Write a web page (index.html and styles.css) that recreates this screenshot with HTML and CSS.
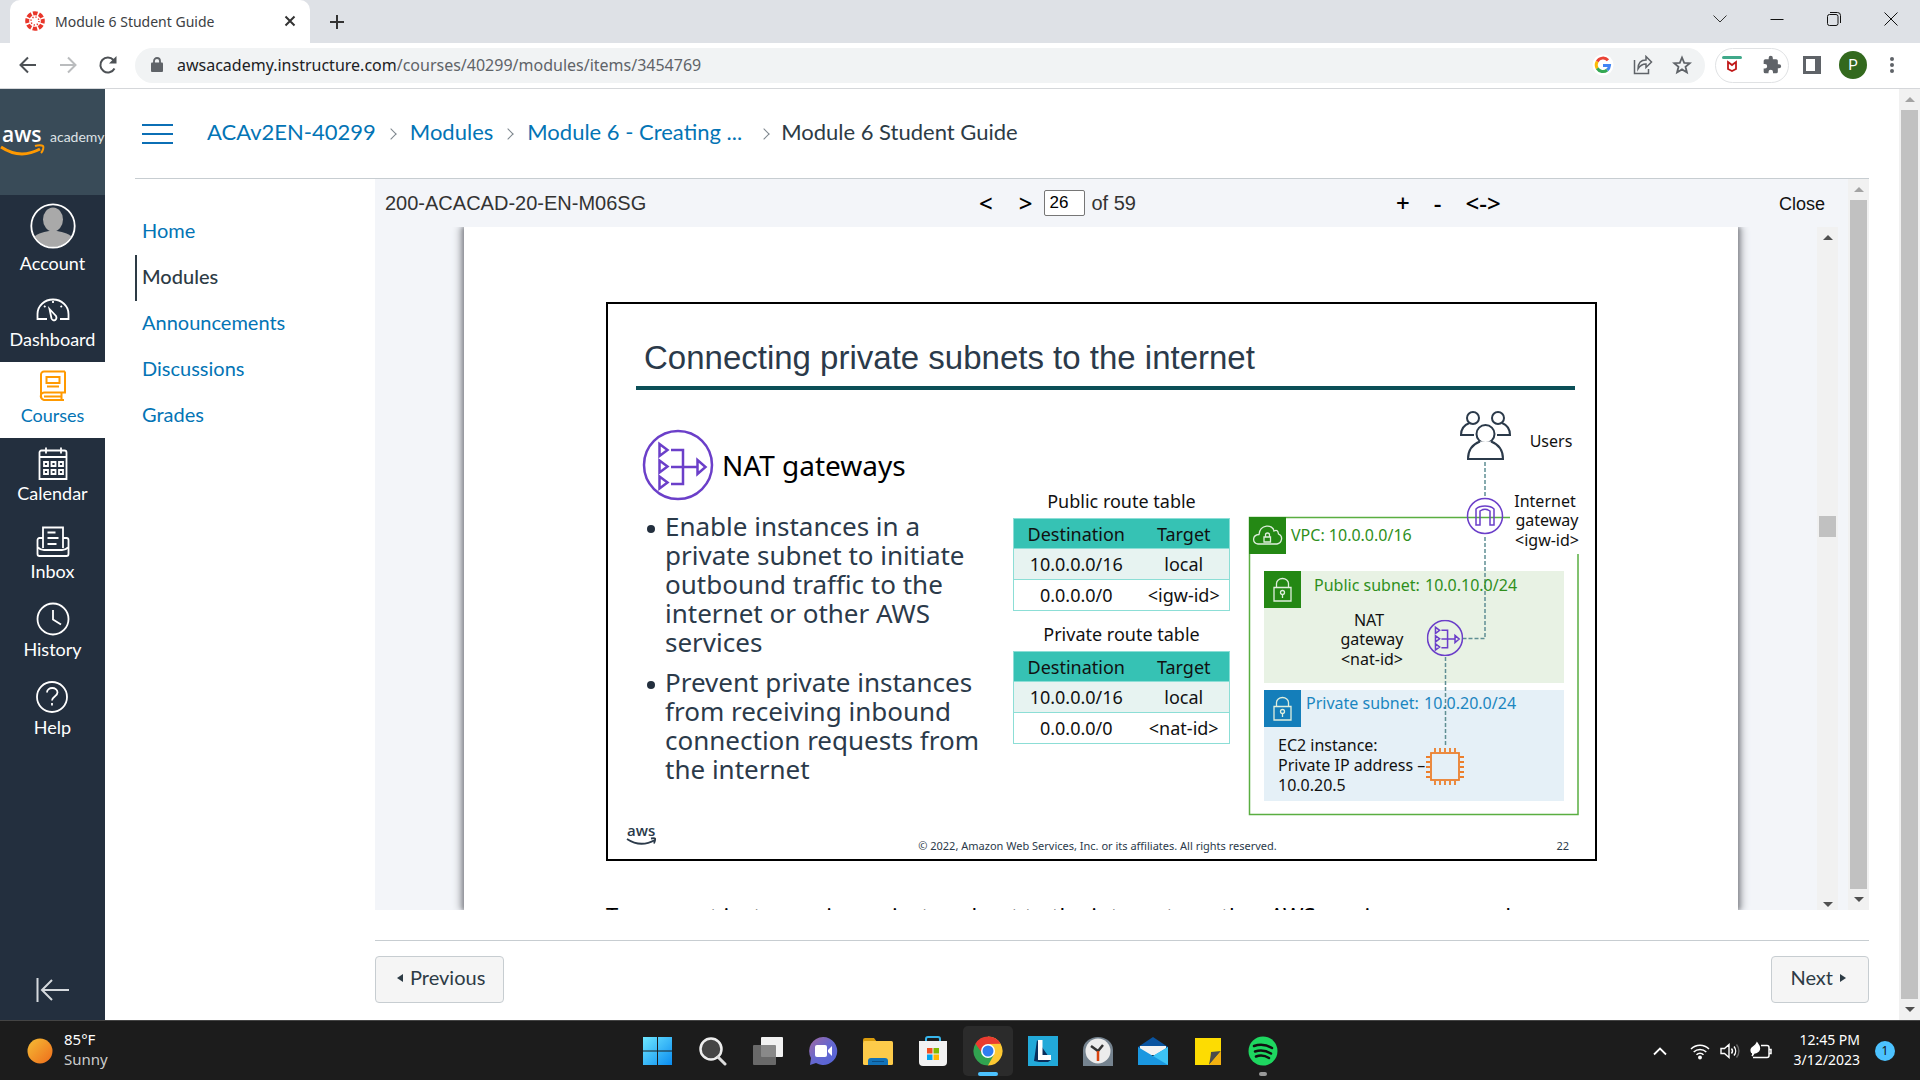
FILE: index.html
```html
<!DOCTYPE html>
<html lang="en">
<head>
<meta charset="utf-8">
<title>Module 6 Student Guide</title>
<link rel="stylesheet" href="styles.css">
</head>
<body>
<svg class="defs" aria-hidden="true">
  <symbol id="nat" viewBox="0 0 72 72">
    <circle cx="36" cy="36" r="34"/>
    <path d="M17.500 15v12l8-6zM17.500 31.500v12l8-6zM17.500 47.500v12l8-6zM55.500 31v14l8-7zM29 21h12v34H29M29 38h26"/>
  </symbol>
  <symbol id="lock" viewBox="0 0 37 37">
    <path d="M10 16.500h17v13.500H10zM12.500 16.500v-4a6 5 0 0 1 12 0v4M18.500 23v4"/>
    <circle cx="18.500" cy="21.500" r="2"/>
  </symbol>
</svg>

<header class="tabstrip">
  <div class="tab">
    <svg width="20" height="20" viewBox="0 0 20 20"><g fill="none" stroke="#e8362a"><circle cx="10" cy="10" r="7.800" stroke-width="4" stroke-dasharray="4.500 1.625" stroke-dashoffset="2.250"/><circle cx="10" cy="10" r="4" stroke-width="1.500" stroke-dasharray="1.200 1.940"/></g></svg>
    <span class="tab-title">Module 6 Student Guide</span>
    <button class="bare" aria-label="Close tab"><svg width="12" height="12" viewBox="0 0 12 12"><path d="M1.500 1.500l9 9m0-9l-9 9" stroke="#333" stroke-width="2"/></svg></button>
  </div>
  <button class="bare newtab" aria-label="New tab"><svg width="16" height="16" viewBox="0 0 16 16"><path d="M8 1v14M1 8h14" stroke="#333" stroke-width="2"/></svg></button>
  <div class="window-controls">
    <button class="bare" aria-label="Search tabs"><svg width="16" height="16" viewBox="0 0 16 16" fill="none" stroke="#333"><path d="M1.500 4.500L8 11l6.500-6.500"/></svg></button>
    <button class="bare" aria-label="Minimize"><svg width="16" height="16" viewBox="0 0 16 16"><path d="M1.500 8.500h13" stroke="#111"/></svg></button>
    <button class="bare" aria-label="Restore"><svg width="16" height="16" viewBox="0 0 16 16" fill="none" stroke="#111"><rect x="1.500" y="3.500" width="10.500" height="11" rx="2"/><path d="M4 1.500h7.500a3 3 0 0 1 3 3V12"/></svg></button>
    <button class="bare" aria-label="Close"><svg width="16" height="16" viewBox="0 0 16 16"><path d="M1.500 1.500l13 13m0-13l-13 13" stroke="#111"/></svg></button>
  </div>
</header>

<div class="toolbar">
  <button class="bare" aria-label="Back"><svg width="20" height="20" viewBox="0 0 20 20" fill="none" stroke="#4d5155" stroke-width="2"><path d="M18 10H3M10 2.500L2.500 10l7.500 7.500"/></svg></button>
  <button class="bare" aria-label="Forward"><svg width="20" height="20" viewBox="0 0 20 20" fill="none" stroke="#babcbe" stroke-width="2"><path d="M2 10h15M10 2.500l7.500 7.500-7.500 7.500"/></svg></button>
  <button class="bare" aria-label="Reload"><svg width="20" height="20" viewBox="0 0 20 20" fill="none" stroke="#4d5155" stroke-width="2"><path d="M16.500 13.500A7.500 7.500 0 1 1 15.500 5L17 6.500"/><path d="M18.500 1v7.500H11z" fill="#4d5155" stroke="none"/></svg></button>
  <div class="omnibox">
    <svg width="12" height="16" viewBox="0 0 12 16"><path d="M3 6V4a3 3 0 0 1 6 0v2" fill="none" stroke="#5f6368" stroke-width="1.800"/><rect y="5.500" width="12" height="9.500" rx="1" fill="#5f6368"/></svg>
    <span class="url"><b>awsacademy.instructure.com</b>/courses/40299/modules/items/3454769</span>
    <svg width="22" height="22" viewBox="0 0 22 22"><circle cx="11" cy="11" r="10.500" fill="#fff"/><g fill="none" stroke-width="3"><path d="M16 6.200A6.700 6.700 0 0 0 5.200 7.600" stroke="#ea4335"/><path d="M5.200 7.600a6.700 6.700 0 0 0 0 6.800" stroke="#fbbc05"/><path d="M5.200 14.400a6.700 6.700 0 0 0 10 1.600" stroke="#34a853"/><path d="M15.200 16a6.500 6.500 0 0 0 2.300-4.500H11" stroke="#4285f4"/></g></svg>
    <svg width="20" height="20" viewBox="0 0 20 20" fill="none" stroke="#5f6368" stroke-width="1.500"><path d="M1.500 5v13.500h14V14"/><path d="M5 14c0-6 3-9 8-9V1.500l5.500 5.500-5.500 5.500V9c-4 0-6 1.500-8 5z"/></svg>
    <svg width="20" height="20" viewBox="0 0 20 20" fill="none" stroke="#5f6368" stroke-width="1.800"><path d="M10 2.500l2.200 5.300 5.600.4-4.300 3.600 1.400 5.600-4.900-3-4.900 3 1.400-5.600L2.200 8.200l5.600-.4z"/></svg>
  </div>
  <div class="extensions">
    <svg width="20" height="20" viewBox="0 0 20 20"><rect y="1" width="20" height="3" rx="1.500" fill="#40a98a"/><path d="M6 7l4 3 4-3v7l-4 2-4-2z" fill="none" stroke="#c01818" stroke-width="1.800"/></svg>
    <svg width="20" height="20" viewBox="0 0 24 24"><path fill="#5f6368" d="M20.500 11H19V7a2 2 0 0 0-2-2h-4V3.500a2.500 2.500 0 0 0-5 0V5H4a2 2 0 0 0-2 2v3.800h1.500a2.700 2.700 0 0 1 0 5.400H2V20a2 2 0 0 0 2 2h3.800v-1.500a2.700 2.700 0 0 1 5.400 0V22H17a2 2 0 0 0 2-2v-4h1.500a2.500 2.500 0 0 0 0-5z"/></svg>
  </div>
  <svg class="sidepanel" width="18" height="18" viewBox="0 0 18 18"><path fill="#5f6368" d="M0 0h18v18H0zM3 3v12h9V3z" fill-rule="evenodd"/></svg>
  <span class="profile">P</span>
  <svg class="kebab" width="4" height="18" viewBox="0 0 4 18" fill="#5f6368"><circle cx="2" cy="3" r="2"/><circle cx="2" cy="9" r="2"/><circle cx="2" cy="15" r="2"/></svg>
</div>

<div class="content">
  <nav class="global-nav" aria-label="Global">
    <a class="logo" href="#"><svg width="105" height="106" viewBox="0 0 105 106"><text x="2" y="53" class="logo-aws">aws</text><text x="50" y="53" class="logo-academy">academy</text><path d="M1 58c12 8 26 9 39 2" fill="none" stroke="#f90" stroke-width="3"/><path d="M35 57c3-1 7-1 8 0s0 5-2 7" fill="none" stroke="#f90" stroke-width="2"/></svg></a>
    <a class="nav-item account" href="#"><svg width="46" height="46" viewBox="0 0 46 46"><clipPath id="face"><circle cx="23" cy="23" r="21"/></clipPath><g clip-path="url(#face)" fill="#a9a9a9"><ellipse cx="23" cy="16.500" rx="10" ry="12"/><path d="M3 46V36c2-5 10-7 16-8h8c6 1 14 3 16 8v10z"/></g><circle cx="23" cy="23" r="21.700" fill="none" stroke="#fff" stroke-width="1.800"/></svg><span>Account</span></a>
    <a class="nav-item" href="#"><svg width="36" height="36" viewBox="0 0 36 36"><path d="M12 28H2.500v-5a15.500 14.500 0 0 1 31 0v5H25M14.500 18l6.500 7c2 4-3 6-4.500 2.500zM18 10v2M9 15l1.500 1M27 15l-1.500 1"/></svg><span>Dashboard</span></a>
    <a class="nav-item active" href="#"><svg width="36" height="36" viewBox="0 0 36 36"><path d="M30 4.500H9a3 3 0 0 0-3 3V29a4 4 0 0 0 3 4h20M30 4.500v21H9.500a3.700 3.700 0 0 0 0 7.500M26.500 26v7M9 29.500h17M11.500 10h13v6h-13zM12 19.500h12"/></svg><span>Courses</span></a>
    <a class="nav-item tall" href="#"><svg width="36" height="36" viewBox="0 0 36 36"><path d="M4.500 34V7.500a2 2 0 0 1 2-2h23a2 2 0 0 1 2 2V34zM4.500 12h27M11 2.500v6M26 2.500v6"/><path d="M9 17h4v4H9zM16.500 17h4v4h-4zM24 17h4v4h-4zM9 25h4v4H9zM16.500 25h4v4h-4zM24 25h4v4h-4z"/></svg><span>Calendar</span></a>
    <a class="nav-item tall" href="#"><svg width="36" height="36" viewBox="0 0 36 36"><path d="M8 25V4.500h20V25M8 15H4.500a2 2 0 0 0-2 2v14a2 2 0 0 0 2 2h27a2 2 0 0 0 2-2V17a2 2 0 0 0-2-2H28M3 24.500c2 2 3 2.500 6 2.500h18c3 0 4-.5 6-2.500M12.500 9.500h8M12.500 15h11M12.500 21h9"/></svg><span>Inbox</span></a>
    <a class="nav-item tall" href="#"><svg width="36" height="36" viewBox="0 0 36 36"><circle cx="18" cy="18" r="15.500"/><path d="M18 9v9.500l8 5"/></svg><span>History</span></a>
    <a class="nav-item tall" href="#"><svg width="36" height="36" viewBox="0 0 36 36"><circle cx="17" cy="18" r="15"/><path d="M12 13.500c0-6 10.500-6 10.500 0 0 4-5.500 4-5.500 8M17 24v2.500"/></svg><span>Help</span></a>
    <button class="bare collapse" aria-label="Minimize global navigation"><svg width="36" height="28" viewBox="0 0 36 28" fill="none" stroke="#d5d9dd" stroke-width="2"><path d="M2.500 2v24M34 14H7M17 4L7 14l10 10"/></svg></button>
  </nav>

  <main class="course">
    <div class="crumb-bar">
      <button class="bare" aria-label="Toggle course menu"><svg width="31" height="22" viewBox="0 0 31 22"><path d="M0 2h31M0 11h31M0 20h31" stroke="#0b6fb5" stroke-width="2"/></svg></button>
      <nav class="crumbs" aria-label="Breadcrumb">
        <a href="#">ACAv2EN-40299</a><i></i><a href="#">Modules</a><i></i><a href="#">Module 6 - Creating ...</a><i class="last"></i><span>Module 6 Student Guide</span>
      </nav>
    </div>
    <div class="course-body">
      <nav class="course-nav" aria-label="Course">
        <a href="#">Home</a><a href="#" class="current">Modules</a><a href="#">Announcements</a><a href="#">Discussions</a><a href="#">Grades</a>
      </nav>
      <div class="item">
        <section class="viewer">
          <div class="viewer-main">
            <div class="viewer-bar">
              <span class="doc-name">200-ACACAD-20-EN-M06SG</span>
              <div class="pager">
                <button class="bare strong">&lt;</button><button class="bare strong">&gt;</button>
                <label><input type="text" value="26" aria-label="Page"><span>of 59</span></label>
              </div>
              <div class="zoomer"><button class="bare strong">+</button><button class="bare strong">-</button><button class="bare strong">&lt;-&gt;</button></div>
              <button class="bare close">Close</button>
            </div>
            <div class="viewer-body">
              <article class="sheet">
                <section class="slide">
                  <h1>Connecting private subnets to the internet</h1>
                  <div class="slide-body">
                    <div class="points">
                      <h2><svg class="nat" width="72" height="72"><use href="#nat"/></svg>NAT gateways</h2>
                      <ul>
                        <li>Enable instances in a<br>private subnet to initiate<br>outbound traffic to the<br>internet or other AWS<br>services</li>
                        <li>Prevent private instances<br>from receiving inbound<br>connection requests from<br>the internet</li>
                      </ul>
                    </div>
                    <div class="tables">
                      <table>
                        <caption>Public route table</caption>
                        <tr><th>Destination</th><th>Target</th></tr>
                        <tr><td>10.0.0.0/16</td><td>local</td></tr>
                        <tr><td>0.0.0.0/0</td><td>&lt;igw-id&gt;</td></tr>
                      </table>
                      <table>
                        <caption>Private route table</caption>
                        <tr><th>Destination</th><th>Target</th></tr>
                        <tr><td>10.0.0.0/16</td><td>local</td></tr>
                        <tr><td>0.0.0.0/0</td><td>&lt;nat-id&gt;</td></tr>
                      </table>
                    </div>
                    <svg class="diagram" width="350" height="430" viewBox="0 0 350 430">
                      <rect x="24" y="181" width="300" height="112" fill="#e8f2e4"/>
                      <rect x="24" y="300" width="300" height="111" fill="#e5f0f7"/>
                      <path d="M270 127.500H9.500v297h328.500V164" fill="none" stroke="#5aae41" stroke-width="1.500"/>
                      <rect x="9" y="127" width="37" height="37" fill="#248814"/>
                      <rect x="24" y="181" width="37" height="37" fill="#248814"/>
                      <rect x="24" y="300" width="37" height="37" fill="#147eba"/>
                      <g class="badge">
                        <path d="M18 154c-6-1-6-9 1-9.500C20 134 33 134 34 141c3-1.500 4 0 4.500 3 5 2 3.500 9-1.500 10zM24 147h6.500v5H24zM25.500 147v-2a2 2 0 0 1 4 0v2"/>
                        <use href="#lock" x="24" y="181" width="37" height="37"/>
                        <use href="#lock" x="24" y="300" width="37" height="37"/>
                      </g>
                      <g class="people">
                        <path d="M234 45h-13c0-6 3-10 8.500-12M257 45h13c0-6-3-10-8-12"/>
                        <circle cx="233" cy="28" r="6"/><circle cx="258" cy="28" r="6"/>
                        <circle cx="245.500" cy="44" r="9"/>
                        <path d="M240 51.500c-8 3-12 9-12 17.500h35c0-8.500-4-14.500-12-17.500"/>
                      </g>
                      <path class="link" d="M245 72v36M245 147v101.500H223M205.500 267v90"/>
                      <g class="nat"><circle cx="245" cy="126" r="17.500"/><path d="M236 135v-16c4-4 14-4 18 0v16h-4v-14c-3-2-7-2-10 0v14z"/></g>
                      <svg class="nat mini" x="186.500" y="229.500" width="37" height="37"><use href="#nat" width="37" height="37"/></svg>
                      <g class="chip"><rect x="191" y="363" width="28" height="27"/><path d="M195 362v-4m5 4v-4m5 4v-4m5 4v-4m5 4v-4M195 395v-4m5 4v-4m5 4v-4m5 4v-4m5 4v-4M190 367h-4m4 5h-4m4 5h-4m4 5h-4m4 5h-4M224 367h-4m4 5h-4m4 5h-4m4 5h-4m4 5h-4"/></g>
                      <text x="51" y="151" class="green">VPC: 10.0.0.0/16</text>
                      <text x="74" y="201" class="green">Public subnet:</text><text x="185" y="201" class="green">10.0.10.0/24</text>
                      <text x="66" y="319" class="blue">Private subnet:</text><text x="184" y="319" class="blue">10.0.20.0/24</text>
                      <text x="129" y="236" text-anchor="middle">NAT</text>
                      <text x="132" y="255" text-anchor="middle">gateway</text>
                      <text x="132" y="275" text-anchor="middle">&lt;nat-id&gt;</text>
                      <text x="311" y="57" text-anchor="middle">Users</text>
                      <text x="305" y="117" text-anchor="middle">Internet</text>
                      <text x="307" y="136" text-anchor="middle">gateway</text>
                      <text x="307" y="156" text-anchor="middle">&lt;igw-id&gt;</text>
                      <text x="38" y="361">EC2 instance:</text>
                      <text x="38" y="381">Private IP address –</text>
                      <text x="38" y="401">10.0.20.5</text>
                    </svg>
                  </div>
                  <footer>
                    <svg width="34" height="30" viewBox="0 0 34 30"><text x="1" y="14" class="foot-aws">aws</text><path d="M1 17c9 6 19 6 28 1M25 16.500c5-1 5 0 3 5" fill="none" stroke="#2b3a4a" stroke-width="1.800"/></svg>
                    <span>© 2022, Amazon Web Services, Inc. or its affiliates. All rights reserved.</span>
                    <span class="num">22</span>
                  </footer>
                </section>
                <p>To connect instances in a private subnet to the internet or other AWS services, you need</p>
              </article>
              <div class="scroll inner"><b class="up"></b><span class="knob"></span><b class="down"></b></div>
            </div>
          </div>
          <div class="scroll"><b class="up dim"></b><span class="thumb"></span><b class="down"></b></div>
        </section>
        <div class="item-footer">
          <button class="step"><i class="left"></i>Previous</button>
          <button class="step">Next<i class="right"></i></button>
        </div>
      </div>
    </div>
  </main>
  <div class="scroll page-scroll"><b class="up dim"></b><span class="thumb"></span><b class="down"></b></div>
</div>

<footer class="taskbar">
  <div class="weather">
    <svg width="26" height="26" viewBox="0 0 26 26"><defs><linearGradient id="sun" x1="0" y1="0" x2="1" y2="1"><stop offset="0" stop-color="#f5bd35"/><stop offset="1" stop-color="#ee6c1b"/></linearGradient></defs><circle cx="13" cy="13" r="12.500" fill="url(#sun)"/></svg>
    <div class="weather-text"><div>85°F</div><div class="muted">Sunny</div></div>
  </div>
  <div class="apps">
    <svg viewBox="0 0 30 30"><defs><linearGradient id="win" x1="0" y1="0" x2="1" y2="1"><stop offset="0" stop-color="#6ee7ff"/><stop offset="1" stop-color="#0a8cf0"/></linearGradient></defs><path fill="url(#win)" d="M0 1h14v13.500H0zM15 1h14v13.500H15zM0 15.500h14V29H0zM15 15.500h14V29H15z"/></svg>
    <svg viewBox="0 0 30 30"><circle cx="13" cy="13" r="10.500" fill="#454545" stroke="#eee" stroke-width="2.500"/><path d="M20 21l7 7" stroke="#ddd" stroke-width="3" stroke-linecap="round"/></svg>
    <svg viewBox="0 0 30 30"><rect x="8" y="1" width="22" height="20" rx="1" fill="#f2f2f2"/><rect x="0" y="9" width="23" height="20" rx="1" fill="#777" opacity=".85"/></svg>
    <svg viewBox="0 0 30 30"><defs><linearGradient id="chat" x1="0" y1="0" x2="1" y2="1"><stop offset="0" stop-color="#a3689f"/><stop offset=".5" stop-color="#6668d0"/><stop offset="1" stop-color="#5364d8"/></linearGradient></defs><path d="M15 1a14 14 0 1 1-7 26l-6 2 1-7A14 14 0 0 1 15 1z" fill="url(#chat)"/><rect x="7" y="9" width="12" height="12" rx="2" fill="#fff"/><path d="M20 14l4-4v10l-4-4z" fill="#fff"/></svg>
    <svg viewBox="0 0 30 30"><path d="M0 4a2 2 0 0 1 2-2h9l3 4H0z" fill="#d99c0d"/><rect y="5" width="30" height="24" rx="1.500" fill="#fdcb4a"/><path d="M5 29v-4a3 3 0 0 1 3-3h14a3 3 0 0 1 3 3v4z" fill="#1272b8"/><path d="M9 25.500h12" stroke="#0a4f86"/></svg>
    <svg viewBox="0 0 30 30"><path d="M8 6V3a2 2 0 0 1 2-2h10a2 2 0 0 1 2 2v3" fill="none" stroke="#38b6ec" stroke-width="2"/><path d="M1 5h28v21a4 4 0 0 1-4 4H5a4 4 0 0 1-4-4z" fill="#f2f2f2"/><path d="M9 12h5.500v5.500H9z" fill="#f25022"/><path d="M15.500 12H21v5.500h-5.500z" fill="#7fba00"/><path d="M9 18.500h5.500V24H9z" fill="#00a4ef"/><path d="M15.500 18.500H21V24h-5.500z" fill="#ffb900"/></svg>
    <span class="running"><svg viewBox="0 0 30 30"><path d="M15 15V.5a14.500 14.500 0 0 1 12.560 7.250A14.500 14.500 0 0 1 15 29.500z" fill="#fdc832"/><path d="M15 8L2.440 7.750A14.500 14.500 0 0 0 15 29.500l6-11z" fill="#31a350"/><path d="M2.440 7.750A14.500 14.500 0 0 1 27.560 7.750L15 8l-6 9z" fill="#ea3b30"/><circle cx="15" cy="15" r="7" fill="#fff"/><circle cx="15" cy="15" r="5.500" fill="#2f7df0"/></svg></span>
    <svg viewBox="0 0 30 30"><path d="M0 0h30v30H0z" fill="#22a9d9"/><path d="M9 4L6 25l5 1h9l3-2z" fill="#0a2e5c"/><path d="M10 4h4.500v15H23v5H10z" fill="#fff"/></svg>
    <svg viewBox="0 0 30 30"><path d="M0 14A15 13 0 0 1 30 14v16H0z" fill="#75838f"/><circle cx="15" cy="15" r="12.500" fill="#ececec"/><path d="M8 10l7 5 5-6" fill="none" stroke="#333" stroke-width="2.500"/><path d="M15 15v10" stroke="#d8430e" stroke-width="2.500"/></svg>
    <svg viewBox="0 0 30 30"><path d="M0 11L15 1l15 10v4H0z" fill="#0a54a0"/><path d="M2 10h26v9H2z" fill="#f3f3f3"/><path d="M0 11l15 9 15-9v18H0z" fill="#1a97e0"/><path d="M15 20l15-9v18z" fill="#3cc3f5"/></svg>
    <svg viewBox="0 0 30 30"><path d="M2 2h26v27H2z" fill="#fddc02"/><path d="M16 29c1-5 2-11 2-13l10-1z" fill="#4b4b4b"/><path d="M16 29h12V15z" fill="#f2b010"/></svg>
    <span class="idle"><svg viewBox="0 0 30 30"><circle cx="15" cy="15" r="14.500" fill="#1ed760"/><path d="M6 10c6-2 13-1 18 2M7 15.500c5-1.500 11-1 16 2M8 20.500c4-1.500 9-1 13 1.500" fill="none" stroke="#111" stroke-width="2.500" stroke-linecap="round"/></svg></span>
  </div>
  <div class="tray">
    <svg width="16" height="16" viewBox="0 0 16 16" fill="none" stroke="#fff" stroke-width="1.800"><path d="M2 11.500l6-6 6 6"/></svg>
    <svg class="wifi" width="20" height="20" viewBox="0 0 20 20" fill="none" stroke="#fff" stroke-width="1.500"><path d="M1 8a12.500 12.500 0 0 1 18 0M3.700 11a9 9 0 0 1 12.600 0M6.500 13.800a5 5 0 0 1 7 0"/><circle cx="10" cy="16.500" r="1.200" fill="#fff"/></svg>
    <svg width="20" height="20" viewBox="0 0 20 20" fill="none" stroke="#fff" stroke-width="1.400"><path d="M1 7.500h3.500L9 3.500v13l-4.500-4H1zM11.500 7.500a4 4 0 0 1 0 5M14 5.500a7 7 0 0 1 0 9"/><path d="M16.500 3.500a10 10 0 0 1 0 13" stroke="#666"/></svg>
    <svg width="22" height="20" viewBox="0 0 22 20" fill="none" stroke="#fff" stroke-width="1.500"><path d="M11 4.500h6a2 2 0 0 1 2 2v8a2 2 0 0 1-2 2H3M19 8.500h2v4h-2"/><path d="M2 12c-3-6 3-5 5-10 4 5 3 9-3 10l-2 3" fill="#fff"/></svg>
    <div class="clock"><div>12:45 PM</div><div>3/12/2023</div></div>
    <span class="count">1</span>
  </div>
</footer>
</body>
</html>
```
FILE: styles.css
```css
* { box-sizing: border-box; }
body {
  margin: 0;
  height: 100vh;
  display: flex;
  flex-direction: column;
  overflow: hidden;
  background: #fff;
  font-family: Lato, sans-serif;
  color: #2d3b45;
}
a { color: #0374b5; text-decoration: none; }
svg { display: block; flex: none; }
.defs { position: absolute; width: 0; height: 0; }
.bare {
  border: 0;
  padding: 0;
  background: none;
  font: inherit;
  color: inherit;
}

/* Browser frame */
.tabstrip {
  display: flex;
  align-items: center;
  height: 43px;
  flex: none;
  padding-left: 10px;
  background: #dee1e6;
  font: 14px "Noto Sans", sans-serif;
}
.tab {
  display: flex;
  align-items: center;
  align-self: stretch;
  width: 300px;
  padding: 0 14px 1px 15px;
  gap: 10px;
  background: #fff;
  border-radius: 10px 10px 0 0;
  color: #3c4043;
}
.tab-title { flex: 1; }
.newtab { margin-left: 19px; }
.window-controls { display: flex; gap: 41px; margin: 0 21px 5px auto; }
.toolbar {
  display: flex;
  align-items: center;
  height: 46px;
  flex: none;
  padding: 0 26px 1px 18px;
  gap: 20px;
  border-bottom: 1px solid #d5d7da;
}
.omnibox {
  display: flex;
  align-items: center;
  flex: 1;
  height: 35px;
  margin-right: -10px;
  margin-left: -3px;
  padding: 0 13px 0 16px;
  gap: 19px;
  border-radius: 18px;
  background: #f1f3f4;
}
.url { flex: 1; margin-left: -5px; font: 16px "Noto Sans", sans-serif; color: #5f6368; }
.url b { font-weight: 400; color: #202124; }
.extensions {
  display: flex;
  align-items: center;
  gap: 20px;
  height: 35px;
  padding: 0 6px;
  border: 1px solid #e0e2e4;
  border-radius: 18px;
}
.sidepanel { margin-left: -6px; }
.profile {
  width: 28px;
  height: 28px;
  margin-left: -2px;
  border-radius: 50%;
  background: #33691e;
  color: #fff;
  font: 15px/28px Roboto, sans-serif;
  text-align: center;
}
.kebab { margin-left: 3px; }

/* Scrollbars */
.scroll {
  display: flex;
  flex-direction: column;
  align-items: center;
  width: 21px;
  flex: none;
  background: #f1f1f1;
}
.scroll .up, .scroll .down {
  height: 21px;
  flex: none;
  display: flex;
  align-items: center;
}
.scroll .up::before, .scroll .down::before {
  content: "";
  border: 5px solid transparent;
}
.scroll .up::before { border-top: 0; border-bottom-color: #505050; }
.scroll .down::before { border-bottom: 0; border-top-color: #505050; }
.scroll .dim::before { border-bottom-color: #a3a3a3; }
.thumb { flex: 1; width: 17px; background: #c1c1c1; }
.inner { justify-content: space-between; height: 100%; }
.inner .knob { width: 17px; height: 21px; margin-bottom: 94px; background: #c1c1c1; }
.inner .down { height: 12px; }

/* Canvas global navigation */
.content { display: flex; flex: 1; min-height: 0; }
.global-nav {
  display: flex;
  flex-direction: column;
  width: 105px;
  flex: none;
  background: #232f3e;
}
.logo { background: #394b58; }
.logo-aws { font: 600 21px "Open Sans", sans-serif; fill: #fff; }
.logo-academy { font: 14px Lato, sans-serif; fill: #dfe3e6; }
.nav-item {
  display: flex;
  flex-direction: column;
  align-items: center;
  justify-content: flex-end;
  height: 76px;
  padding-bottom: 11px;
  font-size: 18px;
  line-height: 24px;
  color: #fff;
}
.nav-item > svg { fill: none; stroke: #fff; stroke-width: 1.800; }
.nav-item.account { height: 91px; }
.nav-item.account > svg { stroke: none; margin-bottom: 2px; }
.nav-item.tall { height: 78px; }
.nav-item.active { background: #fff; color: #0374b5; }
.nav-item.active > svg { stroke: #f90; stroke-width: 2; }
.collapse { margin: auto auto 16px; }

/* Course page */
.course {
  display: flex;
  flex-direction: column;
  flex: 1;
  min-width: 0;
  padding: 0 30px;
}
.crumb-bar {
  display: flex;
  align-items: center;
  gap: 34px;
  height: 90px;
  flex: none;
  padding-left: 7px;
  border-bottom: 1px solid #c7cdd1;
}
.crumbs { display: flex; align-items: center; padding-bottom: 4px; font-size: 22px; line-height: 30px; }
.crumbs i {
  width: 8px;
  height: 8px;
  margin: 5px 15px 0 11px;
  border: solid #7d868d;
  border-width: 1px 1px 0 0;
  transform: rotate(45deg);
}
.crumbs i.last { margin: 5px 13px 0 18px; }
.course-body { display: flex; flex: 1; min-height: 0; }
.course-nav {
  display: flex;
  flex-direction: column;
  width: 240px;
  flex: none;
  padding-top: 30px;
  font-size: 20px;
  line-height: 42px;
}
.course-nav a { padding: 0 0 4px 5px; border-left: 2px solid transparent; }
.course-nav .current { border-color: #2d3b45; color: #2d3b45; font-weight: 500; }
.item { display: flex; flex-direction: column; flex: 1; min-width: 0; }

/* Document viewer */
.viewer { display: flex; flex: 1; min-height: 0; background: #f3f5f9; }
.viewer-main { display: flex; flex-direction: column; flex: 1; min-width: 0; padding-right: 10px; }
.viewer-bar {
  display: grid;
  grid-template-columns: 594px 407px 1fr auto;
  align-items: center;
  height: 48px;
  flex: none;
  padding: 0 13px 0 10px;
  font: 20px "Liberation Sans", sans-serif;
  color: #333;
}
.viewer-bar .strong { font: 500 24px/30px "Noto Sans", sans-serif; color: #000; }
.pager, .zoomer { display: flex; align-items: center; }
.pager { gap: 26px; }
.pager label { display: flex; align-items: center; gap: 6px; margin-left: -14px; }
.pager input {
  width: 41px;
  height: 26px;
  padding: 0 4px;
  border: 1px solid #767676;
  border-radius: 2px;
  font: 17px "Liberation Sans", sans-serif;
}
.zoomer { gap: 24px; padding-left: 10px; }
.close { padding-top: 3px; font-size: 18px; color: #111; }
.viewer-body { display: flex; flex: 1; min-height: 0; overflow: hidden; padding-left: 89px; }
.sheet {
  flex: 1;
  margin-right: 79px;
  padding: 75px 141px 0 142px;
  background: #fff;
  box-shadow: -2px 0 4px #8c8e94, 2px 0 4px #8c8e94, -6px 0 6px #c9cbd0, 6px 0 6px #c9cbd0;
}
.sheet p { margin: 39px 0 0; font: 22px/30px "Noto Sans", sans-serif; color: #000; white-space: nowrap; }

/* Slide */
.slide {
  display: flex;
  flex-direction: column;
  height: 559px;
  border: 2px solid #000;
  font-family: "Noto Sans", sans-serif;
}
.slide h1 {
  margin: 0 20px 0 28px;
  padding: 34px 0 8px 8px;
  border-bottom: 4px solid #0b4f57;
  font: 33px/40px "Liberation Sans", sans-serif;
  color: #2b3a4a;
}
.slide-body { display: grid; grid-template-columns: 1fr 217px 350px; column-gap: 10px; padding-right: 5px; }
.points { padding: 39px 0 0 34px; }
.points h2 { display: flex; align-items: center; gap: 8px; margin: 0; font-size: 28px; font-weight: 400; line-height: 70px; color: #000; }
.points ul { margin: 11px 0 0; padding: 0 0 0 23px; list-style: none; font-size: 26px; line-height: 29px; color: #2b3a4a; }
.points li { white-space: nowrap; }
.points li + li { margin-top: 11px; }
.points li::before {
  content: "";
  float: left;
  width: 8px;
  height: 8px;
  margin: 13px 0 0 -18px;
  border-radius: 50%;
  background: #232f3e;
}
.nat { fill: none; stroke: #6b3fc9; stroke-width: 2.500; }
.diagram g.nat { stroke-width: 1.500; }
.nat.mini { stroke-width: 3; }
.tables { display: flex; flex-direction: column; gap: 11px; padding-top: 99px; }
.tables table { width: 100%; border-collapse: collapse; font-size: 18px; line-height: 24px; color: #111; text-align: center; table-layout: fixed; }
.tables caption { padding-bottom: 5px; }
.tables th, .tables td { height: 31px; padding: 0; }
.tables th { height: 30px; font-weight: 400; background: #36c2b4; }
.tables th:first-child { width: 125px; }
.tables tr { border: 1px solid #8cded6; }
.tables tr:nth-child(2) { background: #e7f3f1; }
.diagram text { font-size: 16px; fill: #111; }
.diagram .green { fill: #2f8f1c; }
.diagram .blue { fill: #1b86c0; }
.badge { fill: none; stroke: #dfeedd; stroke-width: 1.300; }
.people { fill: #fff; stroke: #2b3a4a; stroke-width: 2; }
.link { fill: none; stroke: #5f8f94; stroke-width: 1.500; stroke-dasharray: 4 2; }
.chip { fill: none; stroke: #ec7f2c; stroke-width: 1.800; }
.slide footer {
  display: grid;
  grid-template-columns: 1fr auto 1fr;
  align-items: center;
  margin-top: auto;
  padding: 0 26px 6px 18px;
  height: 42px;
  font-size: 11px;
  line-height: 16px;
  color: #2b3a4a;
}
.slide footer span { padding-top: 18px; }
.slide .num { text-align: right; }
.foot-aws { font: 600 15px "Open Sans", sans-serif; fill: #2b3a4a; }

.item-footer {
  display: flex;
  justify-content: space-between;
  margin-top: 30px;
  padding: 15px 0 17px;
  border-top: 1px solid #c7cdd1;
}
.step {
  display: flex;
  align-items: center;
  gap: 7px;
  height: 47px;
  padding: 0 18px 5px;
  border: 1px solid #c7cdd1;
  border-radius: 4px;
  background: #f5f5f5;
  font: 20px Lato, sans-serif;
  color: #2d3b45;
}
.step i { border: 4px solid transparent; margin-top: 2px; }
.step .left { margin-left: 3px; border-right: 6px solid #2d3b45; border-left: 0; }
.step .right { margin-right: 4px; border-left: 6px solid #2d3b45; border-right: 0; }

/* Taskbar */
.taskbar {
  display: grid;
  grid-template-columns: 1fr auto 1fr;
  align-items: center;
  height: 60px;
  flex: none;
  border-top: 1px solid #444;
  background: #1c1c1c;
  color: #fff;
  font: 15px/20px "Noto Sans", sans-serif;
}
.weather { display: flex; align-items: center; gap: 11px; padding-left: 27px; }
.weather-text { padding-bottom: 4px; }
.muted { color: #ccc; }
.apps { display: flex; align-items: center; gap: 25px; }
.apps svg { width: 30px; height: 30px; }
.running, .idle { position: relative; }
.running { margin: 0 -10px; padding: 10px; border-radius: 5px; background: #2b2b2b; }
.running::after, .idle::after {
  content: "";
  position: absolute;
  bottom: 0;
  left: 50%;
  width: 20px;
  height: 4px;
  margin-left: -10px;
  border-radius: 2px;
  background: #4cc2ff;
}
.idle::after { bottom: -10px; width: 8px; margin-left: -4px; background: #999; }
.tray { display: flex; align-items: center; justify-content: flex-end; gap: 10px; padding-right: 25px; }
.wifi { margin-left: 12px; }
.clock { margin-left: 12px; padding-bottom: 2px; text-align: right; font-size: 14px; }
.count {
  width: 20px;
  height: 20px;
  margin-left: 5px;
  border-radius: 50%;
  background: #4cc2ff;
  color: #111;
  font-size: 12px;
  line-height: 20px;
  text-align: center;
}
```
